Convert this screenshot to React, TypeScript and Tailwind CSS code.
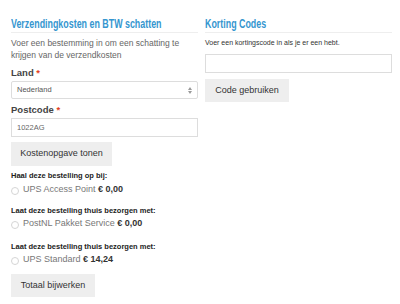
import React from "react";

const sans = "font-['Liberation_Sans',Arial,sans-serif]";
const head =
  "inline-block whitespace-nowrap origin-left scale-x-[0.74] font-['Liberation_Sans',Arial,sans-serif] text-[12px] font-bold text-[#3596cf] leading-[14px]";

function Radio({ label, price }: { label: string; price: string }) {
  return (
    <label className="flex items-center gap-[4px] h-[14px]">
      <span className="w-[8px] h-[8px] rounded-full border border-[#d5d5d5] bg-white shrink-0 mt-[2px]" />
      <span className="text-[9px] text-[#777]">
        {label} <b className="text-[#333]">{price}</b>
      </span>
    </label>
  );
}

export default function App() {
  return (
    <div className={`w-[400px] h-[304px] bg-white flex gap-[7px] pl-[11px] pr-[8px] ${sans}`}>
      {/* verzendkosten */}
      <div className="w-[187px] flex flex-col">
        <div className="mt-[11px] h-[14px]">
          <h3 className={head}>Verzendingkosten en BTW schatten</h3>
        </div>
        <div className="h-px bg-[#eee] mt-[7px]" />
        <p className="text-[8.5px] leading-[11.5px] text-[#666] mt-[5px]">
          Voer een bestemming in om een schatting te krijgen van de verzendkosten
        </p>
        <div className="text-[9.5px] font-bold text-[#444] mt-[6px] leading-[12px]">
          Land <span className="text-[#e2401c]">*</span>
        </div>
        <div className="mt-[2px] h-[18px] border border-[#ddd] rounded-[2px] flex items-center justify-between px-[5px]">
          <span className="text-[7.5px] text-[#555]">Nederland</span>
          <svg width="4" height="7" viewBox="0 0 4 7" className="text-[#999]">
            <path d="M0 3 L2 0 L4 3 Z M0 4 L2 7 L4 4 Z" fill="currentColor" />
          </svg>
        </div>
        <div className="text-[9.5px] font-bold text-[#444] mt-[5px] leading-[12px]">
          Postcode <span className="text-[#e2401c]">*</span>
        </div>
        <div className="mt-[2px] h-[19px] border border-[#ddd] flex items-center px-[5px]">
          <span className="text-[7.5px] text-[#666]">1022AG</span>
        </div>
        <button className="mt-[5px] w-[101px] h-[24px] bg-[#eee] text-[9px] text-[#333]">
          Kostenopgave tonen
        </button>
        <div className="text-[7.5px] font-bold text-[#222] mt-[5px] leading-[10px]">Haal deze bestelling op bij:</div>
        <div className="mt-[2px]">
          <Radio label="UPS Access Point" price="€ 0,00" />
        </div>
        <div className="text-[7.5px] font-bold text-[#222] mt-[9px] leading-[10px]">
          Laat deze bestelling thuis bezorgen met:
        </div>
        <div className="mt-[1px]">
          <Radio label="PostNL Pakket Service" price="€ 0,00" />
        </div>
        <div className="text-[7.5px] font-bold text-[#222] mt-[11px] leading-[10px]">
          Laat deze bestelling thuis bezorgen met:
        </div>
        <div className="mt-[1px]">
          <Radio label="UPS Standard" price="€ 14,24" />
        </div>
        <button className="mt-[7px] w-[84px] h-[23px] bg-[#eee] text-[9px] text-[#333]">
          Totaal bijwerken
        </button>
      </div>

      {/* korting */}
      <div className="w-[187px] flex flex-col">
        <div className="mt-[11px] h-[14px]">
          <h3 className={head}>Korting Codes</h3>
        </div>
        <div className="h-px bg-[#eee] mt-[7px]" />
        <p className="text-[7px] leading-[10px] text-[#333] mt-[5px]">
          Voer een kortingscode in als je er een hebt.
        </p>
        <div className="mt-[6px] h-[19px] border border-[#ddd]" />
        <button className="mt-[6px] w-[84px] h-[23px] bg-[#eee] text-[9px] text-[#333]">
          Code gebruiken
        </button>
      </div>
    </div>
  );
}
